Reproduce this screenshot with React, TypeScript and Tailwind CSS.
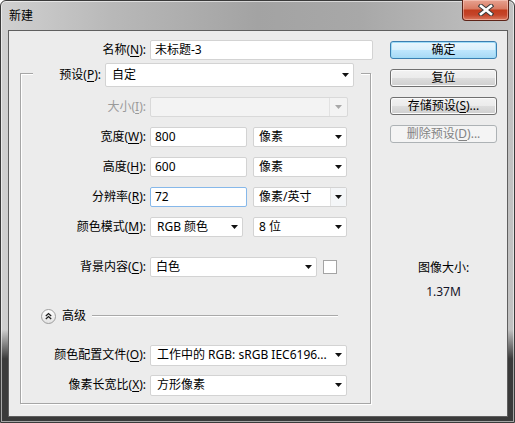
import type { ReactNode } from 'react'
import clsx from 'clsx'

function Arrow({ gray }: { gray?: boolean }) {
  return (
    <svg width="7" height="4" viewBox="0 0 7 4">
      <path d="M0 0H7L3.5 4Z" fill={gray ? '#a8a8a8' : '#111'} />
    </svg>
  )
}

function Key({ k }: { k: string }) {
  return <span className="underline underline-offset-[2px]">{k}</span>
}

function Label({ text, k, className, disabled }: { text: string; k: string; className: string; disabled?: boolean }) {
  return (
    <span className={clsx('shrink-0 text-right whitespace-nowrap', disabled ? 'text-[#9a9a9a]' : 'text-black', className)}>
      {text}(<Key k={k} />):
    </span>
  )
}

function Select({
  className,
  children,
  disabled,
  split,
}: {
  className: string
  children?: ReactNode
  disabled?: boolean
  split?: boolean
}) {
  return (
    <div
      className={clsx(
        'flex items-stretch rounded-[2px] border',
        disabled ? 'bg-[#f3f3f3] border-[#d9d9d9]' : 'bg-white border-[#d3d3d3]',
        className,
      )}
    >
      <span className="flex-1 flex items-center pl-[5px] whitespace-nowrap overflow-hidden">{children}</span>
      <span
        className={clsx(
          'w-[15px] flex items-center justify-center',
          split && 'border-l border-[#e2e2e2]',
          split && !disabled && 'bg-[#f4f6f8] w-[16px]',
          split && disabled && 'w-[18px]',
        )}
      >
        <Arrow gray={disabled} />
      </span>
    </div>
  )
}

function Input({ className, children, focused }: { className: string; children: ReactNode; focused?: boolean }) {
  return (
    <div
      className={clsx(
        'h-[20px] flex items-center pl-[4px] bg-white rounded-[2px] border',
        focused ? 'border-[#86b8ea]' : 'border-[#d3d3d3]',
        className,
      )}
    >
      {children}
    </div>
  )
}

function Button({ children, kind }: { children: ReactNode; kind?: 'default' | 'disabled' }) {
  return (
    <div
      className={clsx(
        'h-[18px] w-[107px] flex items-center justify-center rounded-[3px] border leading-none',
        kind === 'default' &&
          'border-[#3c7fb1] bg-[linear-gradient(to_bottom,#eaf6fd_0%,#d9f0fc_50%,#bee6fd_51%,#a7d9f5_100%)] shadow-[inset_0_0_0_1px_#9fdcf7] text-black',
        kind === 'disabled' && 'border-[#adb2b5] bg-[#f4f4f4] text-[#838383]',
        !kind && 'border-[#707070] bg-[linear-gradient(to_bottom,#f2f2f2_0%,#ebebeb_50%,#dddddd_51%,#cfcfcf_100%)] shadow-[inset_0_0_0_1px_#fbfbfb] text-black',
      )}
    >
      {children}
    </div>
  )
}

function CloseButton() {
  return (
    <div className="-mt-[1px] mr-[5px] w-[47px] h-[21px] rounded-b-[4px] border border-t-0 border-[#5e2418] bg-[linear-gradient(to_bottom,#e7a290_0%,#d87a62_45%,#c13c1d_50%,#c5452a_75%,#db7b60_100%)] shadow-[inset_0_0_0_1px_rgba(255,220,210,0.45)] flex items-center justify-center">
      <svg width="16" height="12" viewBox="0 0 16 12">
        <path d="M3 2L13 10M13 2L3 10" stroke="#3b3b3b" strokeWidth="4.6" strokeLinecap="square" />
        <path d="M3 2L13 10M13 2L3 10" stroke="#ffffff" strokeWidth="2.6" strokeLinecap="square" />
      </svg>
    </div>
  )
}

function AdvancedToggle() {
  return (
    <svg width="15" height="15" viewBox="0 0 15 15">
      <defs>
        <linearGradient id="adv" x1="0" y1="0" x2="0" y2="1">
          <stop offset="0" stopColor="#ffffff" />
          <stop offset="1" stopColor="#e2e2e2" />
        </linearGradient>
      </defs>
      <circle cx="7.5" cy="7.5" r="7" fill="url(#adv)" stroke="#9c9c9c" />
      <path d="M4.8 7L7.5 4.6L10.2 7M4.8 10L7.5 7.6L10.2 10" fill="none" stroke="#1f1f1f" strokeWidth="1.3" />
    </svg>
  )
}

export default function App() {
  return (
    <div className="w-[515px] h-[423px] text-[12px] leading-[16px] text-black font-['Noto_Sans','Noto_Sans_CJK_SC',sans-serif]">
      <div className="w-full h-full flex flex-col rounded-t-[6px] border border-[#3a3a3a] shadow-[inset_0_0_0_1px_rgba(255,255,255,0.55)] bg-[linear-gradient(to_bottom,transparent_78%,#3a3a3a_85%),linear-gradient(90deg,#d0d0d0_0%,#b8b8b8_22%,#a3a3a3_50%,#a8a8a8_70%,#c2c2c2_100%)]">
        {/* Title bar */}
        <div className="h-[29px] flex items-start justify-between">
          <span className="ml-[8px] mt-[6px] font-['Noto_Sans_CJK_SC',sans-serif]">新建</span>
          <CloseButton />
        </div>

        {/* Client area */}
        <div className="ml-[7px] w-[500px] h-[387px] border border-[#5f5f5f] bg-[#ececec] flex">
          {/* Left: form */}
          <div className="w-[365px] pt-[9px] flex flex-col">
            <div className="flex items-center h-[20px]">
              <Label text="名称" k="N" className="w-[137px]" />
              <Input className="ml-[4px] w-[223px]">未标题-3</Input>
            </div>

            <fieldset className="mt-[3px] ml-[11px] w-[351px] border border-[#a6a6a6] shadow-[inset_1px_1px_0_#fff,1px_1px_0_#fff] pb-[8px]">
              <legend className="ml-[12px] bg-[#ececec]">
                <div className="flex items-start h-[20px] w-[328px]">
                  <Label text="预设" k="P" className="w-[68px] mt-[4px]" />
                  <Select className="ml-[4px] w-[249px] h-[24px] shrink-0">
                    <span className="pl-[1px]">自定</span>
                  </Select>
                </div>
              </legend>

              <div className="flex flex-col gap-[10px] mt-[14px]">
                <div className="flex items-center h-[20px]">
                  <Label text="大小" k="I" className="w-[125px]" disabled />
                  <Select className="ml-[4px] w-[198px] h-[20px]" disabled split />
                </div>

                <div className="flex items-center h-[20px]">
                  <Label text="宽度" k="W" className="w-[125px]" />
                  <Input className="ml-[4px] w-[97px]">800</Input>
                  <Select className="ml-[6px] w-[94px] h-[20px]">像素</Select>
                </div>

                <div className="flex items-center h-[20px]">
                  <Label text="高度" k="H" className="w-[125px]" />
                  <Input className="ml-[4px] w-[97px]">600</Input>
                  <Select className="ml-[6px] w-[94px] h-[20px]">像素</Select>
                </div>

                <div className="flex items-center h-[20px]">
                  <Label text="分辨率" k="R" className="w-[125px]" />
                  <Input className="ml-[4px] w-[97px]" focused>
                    72
                  </Input>
                  <Select className="ml-[6px] w-[94px] h-[20px]" split>
                    像素/英寸
                  </Select>
                </div>

                <div className="flex items-center h-[20px]">
                  <Label text="颜色模式" k="M" className="w-[125px]" />
                  <Select className="ml-[4px] w-[93px] h-[20px]">
                    <span className="pl-[1px]">RGB 颜色</span>
                  </Select>
                  <Select className="ml-[10px] w-[94px] h-[20px]">8 位</Select>
                </div>

                <div className="flex items-center h-[20px] mt-[10px]">
                  <Label text="背景内容" k="C" className="w-[125px]" />
                  <Select className="ml-[4px] w-[167px] h-[20px]">白色</Select>
                  <div className="ml-[6px] w-[14px] h-[14px] bg-white border border-[#a4a4a4]" />
                </div>

                <div className="flex items-center h-[20px] mt-[19px]">
                  <div className="ml-[20px] flex">
                    <AdvancedToggle />
                  </div>
                  <span className="ml-[6px]">高级</span>
                  <div className="ml-[6px] w-[246px] h-[2px] border-t border-[#a9a9a9] border-b border-b-white" />
                </div>

                <div className="flex items-center h-[20px] mt-[9px]">
                  <Label text="颜色配置文件" k="O" className="w-[125px]" />
                  <Select className="ml-[4px] w-[197px] h-[21px]">
                    <span className="pl-[1px]">工作中的 RGB: sRGB IEC6196...</span>
                  </Select>
                </div>

                <div className="flex items-center h-[20px]">
                  <Label text="像素长宽比" k="X" className="w-[125px]" />
                  <Select className="ml-[4px] w-[197px] h-[21px]">
                    <span className="pl-[1px]">方形像素</span>
                  </Select>
                </div>
              </div>
            </fieldset>
          </div>

          {/* Right: buttons */}
          <div className="ml-[16px] w-[107px] pt-[10px] flex flex-col">
            <div className="flex flex-col gap-[10px]">
              <Button kind="default">确定</Button>
              <Button>复位</Button>
              <Button>
                存储预设(<Key k="S" />)...
              </Button>
              <Button kind="disabled">
                删除预设(<Key k="D" />)...
              </Button>
            </div>
            <div className="mt-[117px] text-center">图像大小:</div>
            <div className="mt-[8px] text-center text-[#141428]">1.37M</div>
          </div>
        </div>
      </div>
    </div>
  )
}
